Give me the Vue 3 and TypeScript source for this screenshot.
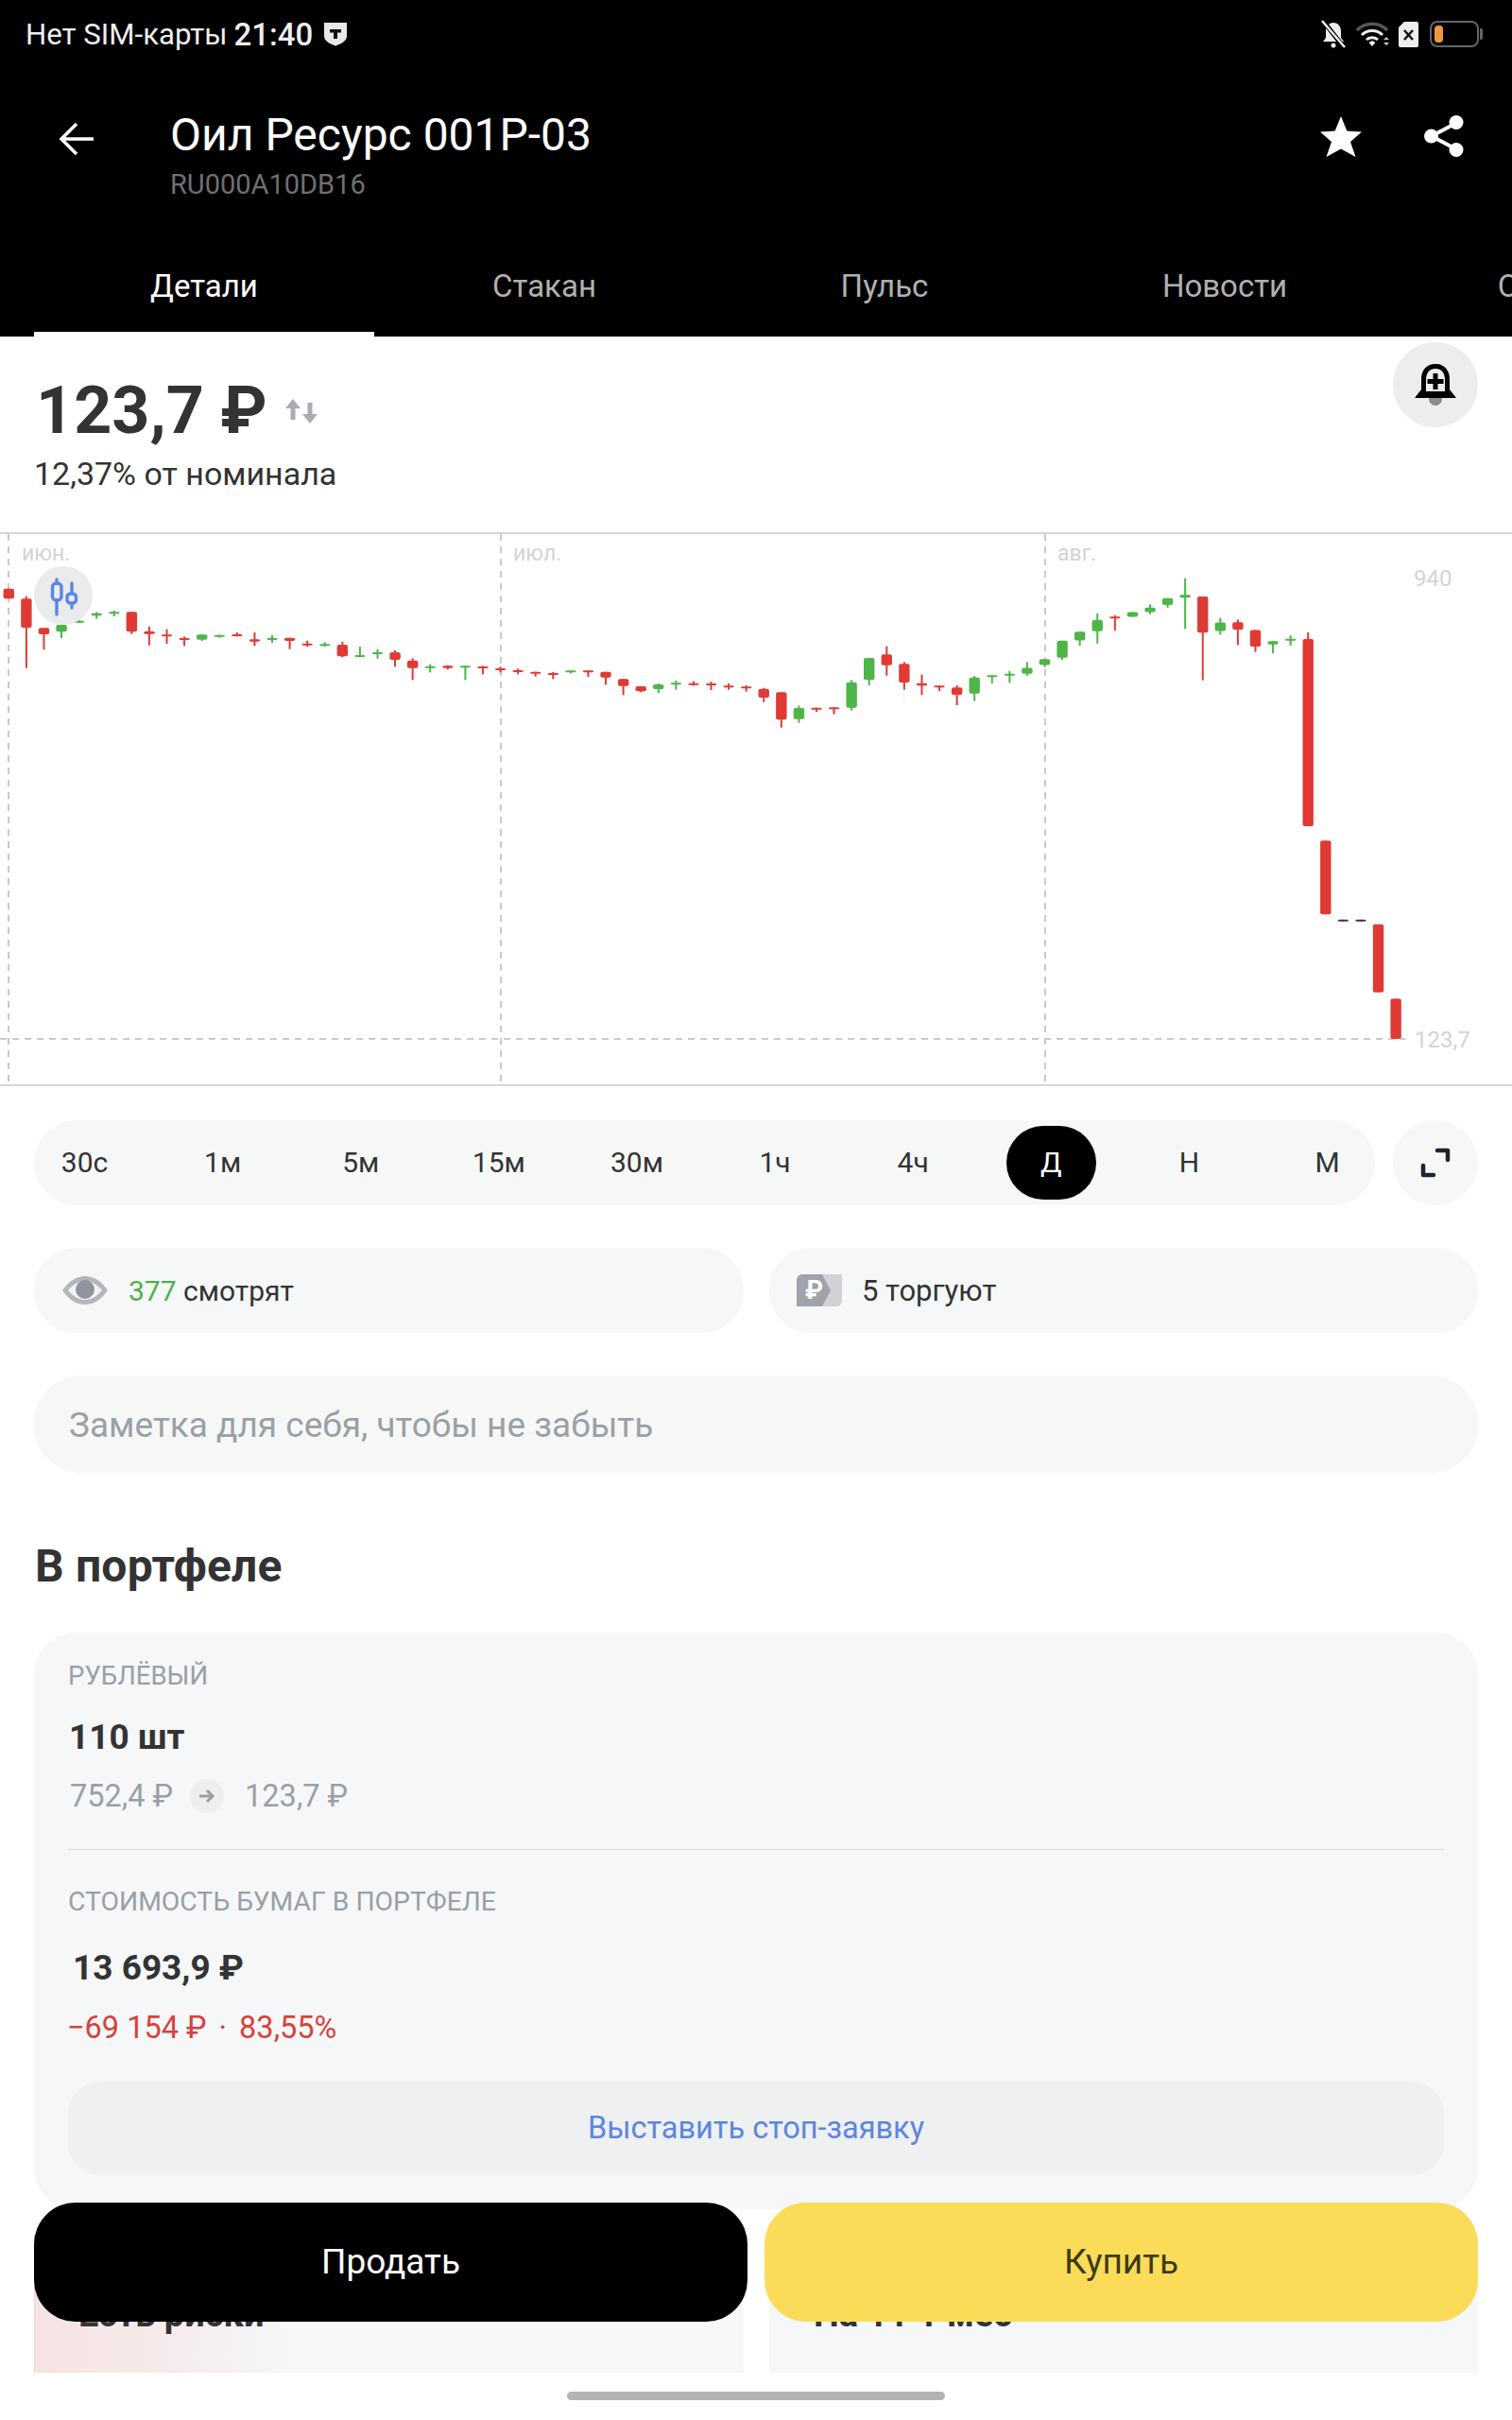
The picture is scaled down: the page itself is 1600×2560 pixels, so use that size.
<script setup lang="ts">
type Candle = [string, number, number, number, number]

const tabs = ['Детали', 'Стакан', 'Пульс', 'Новости', 'Отчётность']
const periods = ['30с', '1м', '5м', '15м', '30м', '1ч', '4ч', 'Д', 'Н', 'М']

// wick top, body top, body bottom, wick bottom
const early: Candle[] = [
  ['r', 188, 188, 220, 220], ['r', 212, 220, 312, 440], ['r', 313, 313, 333, 382], ['g', 303, 303, 325, 345],
  ['g', 286, 290, 293, 296], ['g', 262, 266, 274, 284], ['g', 258, 262, 266, 276], ['r', 262, 262, 325, 332],
  ['r', 308, 323, 332, 368], ['r', 317, 334, 339, 363], ['r', 340, 345, 351, 370], ['g', 334, 334, 350, 354],
  ['g', 335, 335, 340, 344], ['r', 327, 333, 337, 340], ['r', 327, 349, 356, 370], ['g', 336, 345, 351, 360],
  ['r', 344, 344, 354, 380], ['r', 353, 362, 366, 372], ['g', 358, 364, 366, 372], ['r', 357, 366, 403, 406],
  ['g', 372, 399, 403, 406], ['g', 380, 390, 396, 410], ['r', 384, 390, 414, 436], ['r', 409, 416, 440, 478],
  ['g', 428, 434, 439, 454], ['r', 431, 433, 440, 445], ['g', 433, 433, 435, 478], ['r', 433, 435, 439, 460],
  ['r', 436, 441, 446, 454], ['r', 442, 447, 451, 460], ['r', 452, 452, 456, 467], ['r', 453, 456, 457, 475],
  ['g', 448, 448, 453, 458], ['r', 448, 448, 452, 468], ['r', 452, 452, 470, 493], ['r', 475, 475, 497, 526],
  ['r', 498, 498, 514, 517], ['g', 489, 492, 507, 520], ['g', 480, 487, 491, 509], ['r', 482, 488, 492, 496],
  ['r', 483, 489, 494, 510], ['r', 489, 496, 497, 509], ['r', 495, 499, 505, 515], ['r', 503, 506, 534, 548],
  ['r', 517, 517, 604, 629], ['g', 559, 567, 602, 614], ['r', 566, 566, 570, 579], ['r', 565, 565, 568, 587],
  ['g', 478, 485, 566, 575], ['g', 408, 408, 478, 495], ['r', 371, 397, 431, 464], ['r', 421, 427, 486, 509],
  ['r', 461, 488, 496, 526], ['r', 496, 496, 500, 513], ['r', 495, 502, 525, 558], ['g', 465, 470, 521, 545],
  ['g', 463, 463, 467, 489]
]
const late: Candle[] = [
  ['g', 308, 316, 320, 343], ['g', 281, 298, 316, 322], ['g', 272, 272, 290, 296], ['g', 218, 218, 268, 275],
  ['g', 191, 191, 217, 233], ['g', 137, 157, 190, 226], ['r', 142, 146, 148, 188], ['g', 133, 133, 147, 147],
  ['g', 110, 120, 133, 139], ['g', 92, 92, 112, 120], ['g', 33, 82, 90, 183], ['r', 87, 87, 194, 335],
  ['g', 150, 164, 189, 200], ['r', 155, 163, 185, 231], ['r', 186, 186, 235, 251], ['g', 219, 219, 229, 255],
  ['g', 202, 212, 216, 232], ['r', 193, 213, 767, 767], ['r', 810, 810, 1028, 1028], ['d', 1044, 1044, 1049, 1049],
  ['d', 1044, 1044, 1049, 1049], ['r', 1058, 1058, 1259, 1259], ['r', 1278, 1278, 1397, 1397]
]

const colors: Record<string, string> = { r: '#e03a34', g: '#4eb548', d: '#3a3a3a' }

const candles = [
  ...early.map((c) => ({ c, y: (z: number) => 560 + z / 3 })),
  ...late.map((c) => ({ c, y: (z: number) => 600 + z / 2.8 }))
].map(({ c, y }, i) => ({
  x: 9.3 + i * 18.58,
  fill: colors[c[0]],
  wickTop: y(c[1]),
  top: y(c[2]),
  height: Math.max(y(c[3]) - y(c[2]), 2),
  wickBottom: y(c[4])
}))
</script>

<template>
  <div class="screen">
    <div class="page">
      <header class="top">
        <div class="status">
          <span class="carrier">Нет SIM-карты</span>
          <span class="clock">21:40</span>
          <svg class="shield" width="26" height="26" viewBox="0 0 26 26">
            <path d="M1 1h24v14c0 5-5 8-12 10.500C6 23 1 20 1 15z" fill="#e8e8e8" />
            <path d="M7 8h12v3.500h-4V18h-4v-6.500H7z" fill="#111" />
          </svg>
          <div class="status-icons">
            <svg width="30" height="30" viewBox="0 0 30 30">
              <path d="M15 3c5 0 8 4 8 9v7l3 4H4l3-4v-7c0-5 3-9 8-9z" fill="#eee" />
              <circle cx="15" cy="27" r="2.500" fill="#eee" />
              <path d="M4 1l22 28" stroke="#000" stroke-width="5" />
              <path d="M3 1l24 28" stroke="#eee" stroke-width="2.500" />
            </svg>
            <svg width="38" height="28" viewBox="0 0 38 28" fill="none">
              <path d="M2 10c9-9 23-9 32 0" stroke="#555" stroke-width="3.500" />
              <path d="M7 15c6-6 16-6 22 0" stroke="#eee" stroke-width="3" />
              <path d="M12 20c3-3 9-3 12 0" stroke="#eee" stroke-width="3" />
              <path d="M14.500 23l3.500-2 3.500 2-3.500 4z" fill="#eee" />
              <path d="M30 20l3-3 3 3zM30 23l3 3 3-3z" fill="#ccc" />
            </svg>
            <svg width="21" height="27" viewBox="0 0 21 27">
              <path d="M6 0h13a2 2 0 0 1 2 2v23a2 2 0 0 1-2 2H2a2 2 0 0 1-2-2V6z" fill="#eee" />
              <path d="M6 9l9 10M15 9l-9 10" stroke="#111" stroke-width="2.500" />
            </svg>
            <div class="battery"><i></i></div>
          </div>
        </div>

        <div class="title-row">
          <svg class="back" width="38" height="36" viewBox="0 0 38 36" fill="none">
            <path d="M37 18H3M19 2L3 18l16 16" stroke="#fff" stroke-width="3.500" />
          </svg>
          <div class="title-text">
            <h1>Оил Ресурс 001Р-03</h1>
            <p>RU000A10DB16</p>
          </div>
          <svg class="star" width="44" height="43" viewBox="0 0 44 43">
            <path d="M22 0l6.300 15.500L44 16.500 32 27l5.500 16L22 34.500 6.500 43 12 27 0 16.500l15.700-1z" fill="#fff" />
          </svg>
          <svg class="share" width="42" height="44" viewBox="0 0 42 44" fill="none">
            <path d="M34 8L8 22l26 14" stroke="#fff" stroke-width="4" />
            <circle cx="34" cy="7.500" r="7.500" fill="#fff" />
            <circle cx="7.500" cy="22" r="7.500" fill="#fff" />
            <circle cx="34" cy="36.500" r="7.500" fill="#fff" />
          </svg>
        </div>

        <nav class="tabs">
          <span v-for="(t, i) in tabs" :key="t" class="tab" :class="{ active: i === 0 }">{{ t }}</span>
        </nav>
      </header>

      <section class="quote">
        <div>
          <div class="price">
            123,7 ₽
            <svg width="36" height="26" viewBox="0 0 36 26" fill="#a9acb5">
              <path d="M9 0l8 10h-5.500v12h-5V10H1z" />
              <path d="M27 26l8-10h-5.500V4h-5v12H19z" />
            </svg>
          </div>
          <p class="nominal">12,37% от номинала</p>
        </div>
        <button class="round-btn bell" type="button">
          <svg width="44" height="44" viewBox="0 0 44 44">
            <circle cx="22" cy="37" r="7" fill="#8b8b8b" />
            <path d="M22 0C12 0 7 7 7 16v11L0 36h44l-7-9V16C37 7 32 0 22 0z" fill="#000" />
            <path d="M22 5c-7 0-10 5-10 12v12h20V17c0-7-3-12-10-12z" fill="#ebedef" />
            <path d="M19.500 10h5v6h6v5h-6v6h-5v-6h-6v-5h6z" fill="#000" />
          </svg>
        </button>
      </section>

      <section class="chart">
        <svg class="plot" width="1600" height="582" viewBox="0 565 1600 582">
          <g stroke="#c9c9c9" stroke-width="2" stroke-dasharray="7 6" fill="none">
            <path d="M9 565V1147M530 565V1147M1106 565V1147" />
            <path d="M0 1099H1487" />
          </g>
          <g v-for="(k, i) in candles" :key="i" :fill="k.fill">
            <rect :x="k.x - 1" :y="k.wickTop" width="2" :height="k.wickBottom - k.wickTop" />
            <rect :x="k.x - 5.700" :y="k.top" width="11.400" :height="k.height" rx="2" />
          </g>
          <g class="axis">
            <text x="23" y="593">июн.</text>
            <text x="543" y="593">июл.</text>
            <text x="1119" y="593">авг.</text>
            <text x="1496" y="620" class="axis-num">940</text>
            <text x="1497" y="1108" class="axis-num">123,7</text>
          </g>
        </svg>
        <div class="candle-btn">
          <svg width="62" height="62" viewBox="0 0 62 62" fill="none" stroke="#5b86e6" stroke-width="3.400">
            <path d="M24 14v4M24 36v15M40 18v11M40 39v5" stroke-linecap="round" />
            <rect x="19.500" y="18" width="9.500" height="18" rx="4" />
            <rect x="35" y="29" width="9.500" height="10" rx="3.500" />
          </svg>
        </div>
      </section>

      <div class="body">
        <div class="period-row">
          <div class="periods">
            <span v-for="p in periods" :key="p" class="period" :class="{ active: p === 'Д' }">{{ p }}</span>
          </div>
          <button class="round-btn expand" type="button">
            <svg width="32" height="32" viewBox="0 0 32 32" fill="none" stroke="#1f2430" stroke-width="4.500" stroke-linecap="round" stroke-linejoin="round">
              <path d="M18 3h11v10M3 19v10h11" />
            </svg>
          </button>
        </div>

        <div class="stats">
          <div class="stat">
            <svg width="50" height="32" viewBox="0 0 50 32">
              <path d="M1 16C8 6 16 1 25 1s17 5 24 15c-7 10-15 15-24 15S8 26 1 16z" fill="#b3b6bb" />
              <path d="M7 16c6-7 12-10 18-10s12 3 18 10c-6 7-12 10-18 10S13 23 7 16z" fill="#f2f3f5" />
              <circle cx="25" cy="15" r="10" fill="#8f939b" />
            </svg>
            <span class="watching"><b class="green">377</b> смотрят</span>
          </div>
          <div class="stat">
            <svg class="tag" width="48" height="34" viewBox="0 0 48 34">
              <path d="M6 0h42v28a6 6 0 0 1-6 6H6z" fill="#d0d2d6" />
              <path d="M6 0h21l9 17-9 17H0V6a6 6 0 0 1 6-6z" fill="#a0a3ab" />
              <text x="9" y="26" class="tag-rub">₽</text>
            </svg>
            <span>5 торгуют</span>
          </div>
        </div>

        <div class="note">Заметка для себя, чтобы не забыть</div>

        <h2>В портфеле</h2>

        <div class="holding">
          <div class="label">РУБЛЁВЫЙ</div>
          <div class="amount">110 шт</div>
          <div class="prices">
            <span>752,4 ₽</span>
            <i class="arrow">
              <svg width="18" height="16" viewBox="0 0 18 16" fill="none" stroke="#9a9fa5" stroke-width="3">
                <path d="M1 8h14M9 2l6 6-6 6" />
              </svg>
            </i>
            <span>123,7 ₽</span>
          </div>
          <div class="divider"></div>
          <div class="label second">СТОИМОСТЬ БУМАГ В ПОРТФЕЛЕ</div>
          <div class="amount worth">13 693,9 ₽</div>
          <div class="loss">−69 154 ₽<span class="dot">·</span>83,55%</div>
          <button class="stop" type="button">Выставить стоп-заявку</button>
        </div>

        <div class="promos">
          <div class="promo risk">Есть риски</div>
          <div class="promo">На 11 1 мес</div>
        </div>
      </div>
    </div>

    <div class="actions">
      <button class="sell" type="button">Продать</button>
      <button class="buy" type="button">Купить</button>
    </div>

    <div class="home-bar"></div>
  </div>
</template>

<style scoped>
.screen {
  position: relative;
  height: 2560px;
  background: #fff;
  overflow: hidden;
  font-family: Roboto, "Noto Sans", sans-serif;
  color: #333;
}

.page {
  height: 2510px;
  overflow: hidden;
}

.top {
  display: flex;
  flex-direction: column;
  height: 356px;
  background: #000;
  color: #fff;
}

.status {
  display: flex;
  align-items: center;
  height: 72px;
  padding: 0 35px 0 27px;
  box-sizing: border-box;
  color: #eee;
}

.carrier {
  font-size: 31.200px;
}

.clock {
  margin-left: 7px;
  font-size: 33px;
  font-weight: 500;
}

.shield {
  margin-left: 11px;
}

.status-icons {
  display: flex;
  align-items: center;
  gap: 8px;
  margin-left: auto;
}

.battery {
  position: relative;
  width: 52px;
  height: 28px;
  margin-left: 4px;
  padding: 3px;
  box-sizing: border-box;
  border: 2px solid #666;
  border-radius: 8px;
}

.battery::after {
  content: "";
  position: absolute;
  top: 6px;
  right: -6px;
  width: 3px;
  height: 12px;
  border-radius: 0 2px 2px 0;
  background: #666;
}

.battery i {
  display: block;
  width: 9px;
  height: 100%;
  border-radius: 4px;
  background: #f09a37;
}

.title-row {
  display: flex;
  align-items: center;
  height: 100px;
  margin-top: 43px;
  padding-left: 62px;
}

.back {
  margin-top: -36px;
}

.title-text {
  flex: 1;
  margin-left: 80px;
}

h1 {
  margin: 0;
  font-size: 48px;
  line-height: 56px;
  font-weight: 400;
}

.title-text p {
  margin: 4px 0 0;
  font-size: 29px;
  line-height: 40px;
  color: #707070;
}

.star {
  margin: -42px 66px 0 0;
}

.share {
  margin: -42px 51px 0 0;
}

.tabs {
  display: flex;
  margin-top: auto;
  padding-left: 36px;
  white-space: nowrap;
  overflow: hidden;
}

.tab {
  flex: none;
  width: 360px;
  height: 108px;
  line-height: 110px;
  text-align: center;
  font-size: 33px;
  color: #b0b0b0;
}

.tab:last-child {
  padding-left: 18px;
}

.tab.active {
  color: #fff;
  box-shadow: inset 0 -5px #fff;
}

.quote {
  display: flex;
  justify-content: space-between;
  height: 207px;
  padding: 6px 36px 0;
  box-sizing: border-box;
}

.price {
  display: flex;
  align-items: center;
  gap: 18px;
  margin: 34px 0 0 2px;
  height: 76px;
  font-size: 70px;
  font-weight: 700;
}

.price svg {
  margin-top: 2px;
}

.nominal {
  margin: 9px 0 0;
  font-size: 34px;
  line-height: 40px;
}

.round-btn {
  display: flex;
  align-items: center;
  justify-content: center;
  flex: none;
  width: 90px;
  height: 90px;
  padding: 0;
  border: 0;
  border-radius: 50%;
}

.bell {
  background: #ebedef;
}

.expand {
  background: #f6f8f8;
}

.chart {
  position: relative;
  height: 586px;
  box-sizing: border-box;
  border-top: 2px solid #d6d6d6;
  border-bottom: 2px solid #d6d6d6;
}

.plot {
  display: block;
}

.axis text {
  font-size: 23px;
  fill: #d2d4d6;
}

.axis .axis-num {
  font-size: 24px;
}

.candle-btn {
  position: absolute;
  top: 34px;
  left: 36px;
  width: 62px;
  height: 62px;
  border-radius: 50%;
  background: #e9ebed;
}

.body {
  padding: 36px 36px 0;
}

.period-row {
  display: flex;
  gap: 19px;
}

.periods {
  flex: 1;
  display: flex;
  align-items: center;
  justify-content: space-between;
  height: 90px;
  padding: 0 3px 0 6px;
  border-radius: 45px;
  background: #f6f8f8;
}

.period {
  width: 95px;
  height: 78px;
  line-height: 78px;
  text-align: center;
  font-size: 30px;
  border-radius: 39px;
}

.period.active {
  background: #000;
  color: #fff;
}

.stats {
  display: grid;
  grid-template-columns: 751px 750px;
  gap: 27px;
  margin-top: 45px;
}

.stat {
  display: flex;
  align-items: center;
  gap: 21px;
  height: 90px;
  padding-left: 29px;
  border-radius: 44px;
  background: #f5f7f8;
  font-size: 31px;
}

.watching {
  font-size: 30px;
}

.tag-rub {
  font-size: 27px;
  font-weight: 700;
  fill: #fff;
}

.stat b {
  font-weight: 400;
}

.green {
  color: #4fb14a;
}

.note {
  height: 103px;
  line-height: 105px;
  margin-top: 45px;
  padding-left: 37px;
  border-radius: 50px;
  background: #f6f8f8;
  font-size: 37px;
  color: #9ba0a6;
}

h2 {
  margin: 71px 0 42px;
  padding-left: 1px;
  font-size: 48px;
  line-height: 56px;
  font-weight: 700;
  letter-spacing: 0.2px;
}

.holding {
  padding: 28px 36px 36px;
  border-radius: 44px;
  background: #f5f7f9;
}

.label {
  font-size: 27.600px;
  line-height: 36px;
  color: #9a9fa5;
}

.label.second {
  margin-top: 37px;
  font-size: 28.300px;
}

.amount {
  margin: 23px 0 -1px 1px;
  font-size: 37px;
  line-height: 48px;
  font-weight: 700;
}

.amount.worth {
  margin: 28px 0 0 5px;
}

.prices {
  display: flex;
  align-items: center;
  height: 40px;
  margin: 19px 0 0 2px;
  font-size: 32.500px;
  color: #9a9fa5;
}

.arrow {
  display: flex;
  align-items: center;
  justify-content: center;
  width: 36px;
  height: 36px;
  margin: 0 22px 0 18px;
  border-radius: 50%;
  background: #eceef0;
}

.divider {
  height: 1px;
  margin-top: 36px;
  background: #d5d8db;
}

.loss {
  margin: 19px 0 0 -1px;
  font-size: 32.500px;
  line-height: 40px;
  color: #d9403a;
}

.dot {
  margin: 0 13px;
}

.stop {
  display: block;
  width: 100%;
  height: 99px;
  margin-top: 37px;
  padding: 0 0 2px;
  border: 0;
  border-radius: 34px;
  background: #eef0f2;
  font: inherit;
  font-size: 32.500px;
  color: #5d86df;
}

.promos {
  display: grid;
  grid-template-columns: 751px 750px;
  gap: 27px;
  margin-top: 27px;
}

.promo {
  height: 300px;
  padding: 60px 0 0 47px;
  box-sizing: border-box;
  background: #f5f7f9;
  font-size: 38px;
  line-height: 48px;
  font-weight: 700;
  color: #333;
}

.promo.risk {
  padding-left: 46px;
  border-left: 1px solid #f2d3d4;
  background: linear-gradient(90deg, #f6e3e4 0, #f6e8e9 110px, #f5f7f9 270px);
}

.actions {
  position: absolute;
  left: 36px;
  right: 36px;
  top: 2330px;
  display: grid;
  grid-template-columns: 755px 755px;
  gap: 18px;
}

.sell,
.buy {
  height: 126px;
  padding: 0 0 2px;
  border: 0;
  border-radius: 44px;
  font: inherit;
  font-size: 37px;
}

.sell {
  background: #000;
  color: #fff;
}

.buy {
  background: #fbdc58;
  color: #3d3a17;
}

.home-bar {
  position: absolute;
  left: 600px;
  top: 2530px;
  width: 400px;
  height: 9px;
  border-radius: 5px;
  background: #b3b3b3;
}
</style>

<style>
html,
body {
  margin: 0;
  background: #fff;
}
</style>
